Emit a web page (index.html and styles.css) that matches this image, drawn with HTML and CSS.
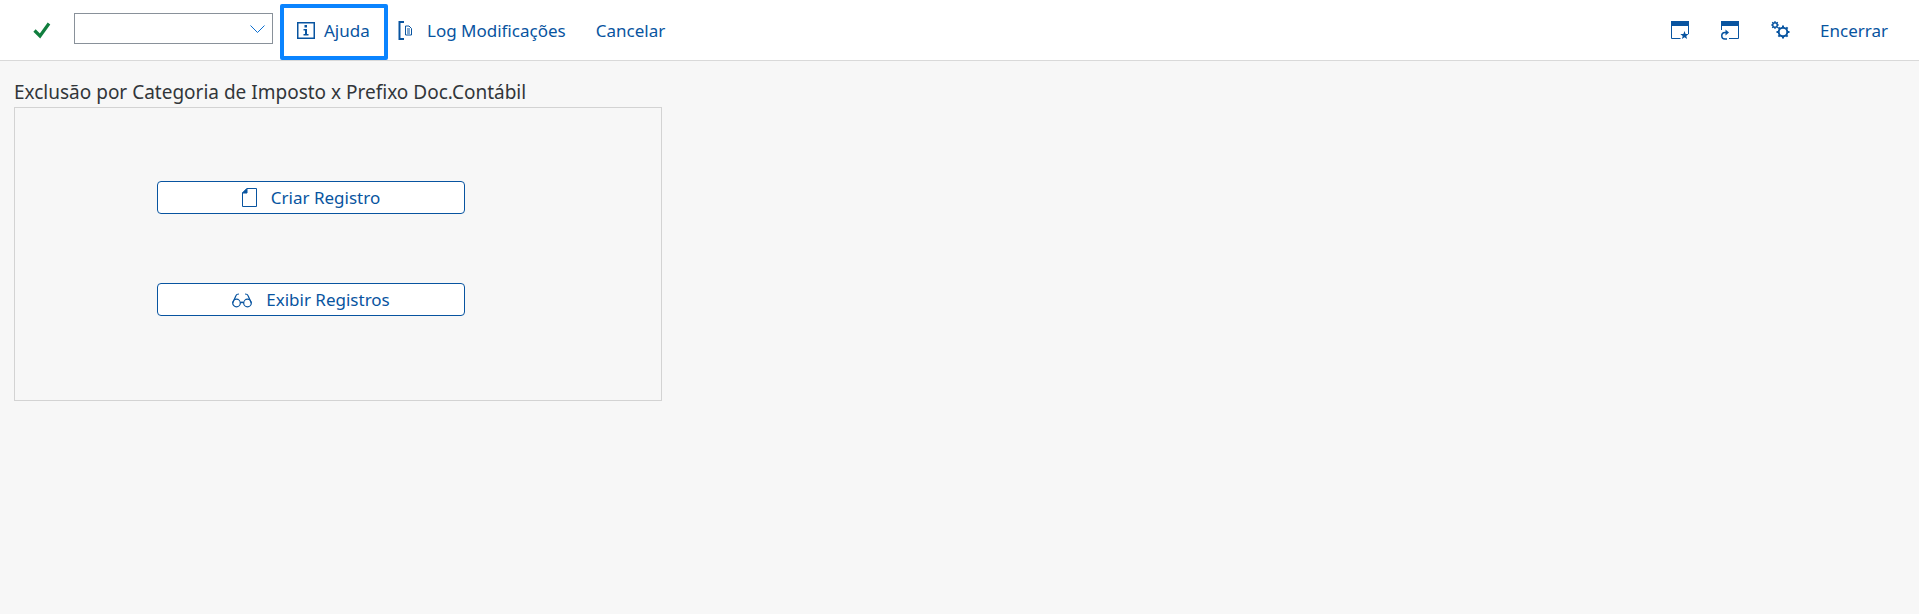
FILE: index.html
```html
<!DOCTYPE html>
<html lang="pt-BR">
<head>
  <meta charset="UTF-8">
  <meta name="viewport" content="width=device-width, initial-scale=1.0">
  <title>Exclusão por Categoria de Imposto x Prefixo Doc.Contábil</title>
  <link rel="stylesheet" href="styles.css">
</head>
<body>

<div class="toolbar">
  <div class="check">
    <svg width="18" height="17" viewBox="0 0 18 17"><path d="M1.500 8.500l5.500 5.500L16 1.500" fill="none" stroke="#107e3e" stroke-width="3.200"/></svg>
  </div>
  <div class="select">
    <svg width="15" height="8" viewBox="0 0 15 8"><path d="M.5 .5l7 7 7-7" fill="none" stroke="#0a6ed1" stroke-width="1"/></svg>
  </div>
  <div class="tool tool-help">
    <svg class="ico" width="18" height="17" viewBox="0 0 18 17"><rect x=".75" y=".75" width="16.500" height="15.500" fill="none" stroke="#0854a0" stroke-width="1.500"/><path d="M7.500 3h2.500v2.500H7.500zM6.500 7H10v5h1.500v1.500h-5V12H8V8.500H6.500z" fill="#0854a0"/></svg>
    <span>Ajuda</span>
  </div>
  <div class="tool tool-log">
    <svg class="ico" width="14" height="19" viewBox="0 0 14 19"><path d="M6 1H1.500v17H6" fill="none" stroke="#0854a0" stroke-width="2"/><path d="M7.500 5h3.500l2.500 2.500v6.500h-6zM9 8h3M9 10h3M9 12h3" fill="none" stroke="#0854a0" stroke-width="1"/></svg>
    <span>Log Modificações</span>
  </div>
  <div class="tool tool-cancel"><span>Cancelar</span></div>

  <div class="tool-right">
    <svg width="18" height="19" viewBox="0 0 18 19"><path d="M0 0h18v5H0z" fill="#0854a0"/><path d="M.5 5v12.500h9M17.500 5v8" fill="none" stroke="#0854a0"/><path d="M13.500 10l1.100 2.900 3.100.2-2.400 1.900.8 3-2.600-1.700-2.600 1.700.8-3-2.400-1.900 3.100-.2z" fill="#0854a0"/></svg>
    <svg width="18" height="19" viewBox="0 0 18 19"><path d="M0 0h18v5H0z" fill="#0854a0"/><path d="M.5 5v4M17.500 5v12.500H8" fill="none" stroke="#0854a0"/><path d="M6 11.500H4a3.200 3.200 0 0 0 0 6.500h2" fill="none" stroke="#0854a0" stroke-width="1.500"/><path d="M4.500 8.500l3.500 3-3.500 3z" fill="#0854a0"/></svg>
    <svg width="19" height="18" viewBox="0 0 19 18"><circle cx="4" cy="4" r="2.300" fill="none" stroke="#0854a0" stroke-width="1.500"/><path d="M4 0v1.500M4 6.500V8M0 4h1.500M6.500 4H8M1.200 1.200l1 1M5.800 5.800l1 1M1.200 6.800l1-1M5.800 2.200l1-1" stroke="#0854a0" stroke-width="1.200"/><circle cx="12" cy="11" r="4.300" fill="none" stroke="#0854a0" stroke-width="2"/><path d="M12 4.500v2M12 15.500v2M5.500 11h2M16.500 11h2M7.400 6.400l1.400 1.400M15.200 14.200l1.400 1.400M7.400 15.600l1.400-1.400M15.200 7.800l1.400-1.400" stroke="#0854a0" stroke-width="2"/></svg>
    <span class="exit">Encerrar</span>
  </div>
</div>

<div class="content">
  <div class="group-title">Exclusão por Categoria de Imposto x Prefixo Doc.Contábil</div>
  <div class="group">
    <div class="btn">
      <svg width="15" height="19" viewBox="0 0 15 19"><path d="M5 .5h9.500v18H.5V5z" fill="none" stroke="#0854a0"/><path d="M5 .5V5H.5z" fill="#0854a0" stroke="#0854a0"/></svg>
      <span class="btn-label">Criar Registro</span>
    </div>
    <div class="btn">
      <svg class="glasses" width="20" height="15" viewBox="0 0 20 15"><circle cx="4.500" cy="10" r="3.800" fill="none" stroke="#0854a0" stroke-width="1.200"/><circle cx="15.500" cy="10" r="3.800" fill="none" stroke="#0854a0" stroke-width="1.200"/><path d="M8.300 10q1.700-1.500 3.400 0M.7 10L4 2.500Q4.500 1 7 1M19.300 10L16 2.500Q15.500 1 13 1" fill="none" stroke="#0854a0" stroke-width="1.200"/></svg>
      <span class="btn-label">Exibir Registros</span>
    </div>
  </div>
</div>

</body>
</html>
```

FILE: styles.css
```css
html, body {
  height: 100%;
}

body {
  font-family: "Noto Sans", Arial, sans-serif;
  background: #f7f7f7;
  margin: 0;
  font-size: 17px;
  color: #0854a0;
}

.toolbar {
  display: flex;
  align-items: center;
  height: 60px;
  background: white;
  border-bottom: 1px solid #d9d9d9;
}

.check {
  display: flex;
  width: 50px;
  margin-left: 33px;
}

.select {
  width: 199px;
  height: 31px;
  box-sizing: border-box;
  margin-left: -9px;
  margin-top: -3px;
  border: 1px solid #89919a;
  background: white;
  display: flex;
  align-items: center;
  justify-content: flex-end;
  padding-right: 7px;
}

.tool {
  display: flex;
  align-items: center;
}

.tool-help {
  box-sizing: border-box;
  width: 108px;
  height: 56px;
  margin-top: 4px;
  margin-left: 7px;
  padding-left: 13px;
  border: 4px solid #0a84ff;
  border-radius: 2px;
}

.tool-help span {
  margin-top: -4px;
}

.tool-help .ico {
  margin-right: 9px;
  margin-top: -3px;
}

.tool-log {
  margin-left: 10px;
}

.tool-log .ico {
  margin-right: 15px;
}

.tool-cancel {
  margin-left: 30px;
}

.tool-right {
  margin-left: auto;
  display: flex;
  align-items: center;
  gap: 32px;
  padding-right: 31px;
}

.exit {
  margin-left: -2px;
}

.content {
  padding: 19px 14px 0;
}

.group-title {
  color: #32363a;
  font-size: 19px;
  line-height: 24px;
  margin-bottom: 3px;
}

.group {
  box-sizing: border-box;
  width: 648px;
  height: 294px;
  border: 1px solid #d3d3d3;
  padding: 73px 0 0 142px;
  display: flex;
  flex-direction: column;
  gap: 69px;
}

.btn {
  box-sizing: border-box;
  width: 308px;
  height: 33px;
  background: white;
  border: 1px solid #0854a0;
  border-radius: 4px;
  display: flex;
  align-items: center;
  justify-content: center;
  gap: 14px;
}

.btn .glasses {
  margin-top: 2px;
}
```
